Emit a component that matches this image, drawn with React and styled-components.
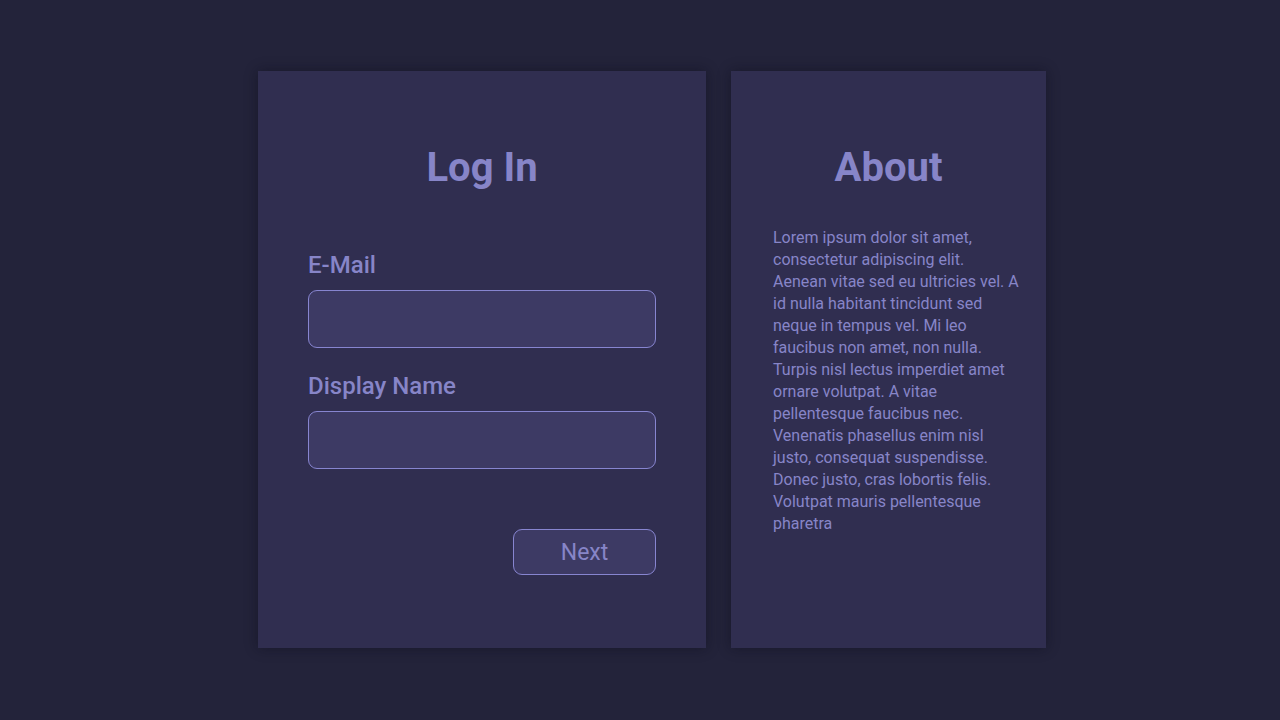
import React from "react";
import styled, { createGlobalStyle } from "styled-components";

const Global = createGlobalStyle`
  html, body { margin: 0; padding: 0; background: #23233a; }
  body { font-family: Roboto, "Noto Sans", sans-serif; }
  * { box-sizing: border-box; }
`;

const Page = styled.div`
  width: 1280px;
  height: 720px;
  background: #23233a;
  display: flex;
  align-items: flex-start;
  justify-content: center;
  padding: 71px 0 0 24px;
  gap: 25px;
`;

const Card = styled.section`
  width: ${(p) => p.$w}px;
  height: 577px;
  background: #302e50;
  box-shadow: 0 0 12px rgba(10, 10, 25, 0.45);
  display: flex;
  flex-direction: column;
  padding: 73px ${(p) => p.$pr}px 0 ${(p) => p.$pl}px;
`;

const Title = styled.h1`
  margin: 0 0 0 ${(p) => p.$shift || 0}px;
  font-size: 40px;
  line-height: 47px;
  font-weight: 700;
  color: #8785c8;
  text-align: center;
`;

const Form = styled.form`
  display: flex;
  flex-direction: column;
  margin-top: 60px;
`;

const Label = styled.label`
  font-size: 24px;
  line-height: 28px;
  font-weight: 500;
  color: #8785c8;
  margin-top: ${(p) => (p.$first ? 0 : 24)}px;
`;

const Input = styled.input`
  margin-top: 11px;
  height: 58px;
  width: 100%;
  background: #3d3a64;
  border: 1px solid #8785d0;
  border-radius: 9px;
  outline: none;
  color: #c8c6f0;
  font-family: inherit;
  font-size: 18px;
  padding: 0 14px;
`;

const Actions = styled.div`
  display: flex;
  justify-content: flex-end;
  margin-top: 60px;
`;

const Button = styled.button`
  width: 143px;
  height: 46px;
  background: #3d3a64;
  border: 1px solid #8785d0;
  border-radius: 9px;
  color: #8785c8;
  font-family: inherit;
  font-size: 23px;
  font-weight: 400;
  cursor: pointer;
`;

const Body = styled.p`
  margin: 36px 0 0;
  width: 246px;
  font-size: 16px;
  line-height: 22px;
  color: #8785c8;
`;

export default function App() {
  return (
    <>
      <Global />
      <Page>
        <Card $w={448} $pl={50} $pr={50}>
          <Title>Log In</Title>
          <Form onSubmit={(e) => e.preventDefault()}>
            <Label $first htmlFor="email">E-Mail</Label>
            <Input id="email" type="email" />
            <Label htmlFor="name">Display Name</Label>
            <Input id="name" type="text" />
            <Actions>
              <Button type="submit">Next</Button>
            </Actions>
          </Form>
        </Card>
        <Card $w={315} $pl={42} $pr={20}>
          <Title $shift={-22}>About</Title>
          <Body>
            Lorem ipsum dolor sit amet, consectetur adipiscing elit. Aenean
            vitae sed eu ultricies vel. A id nulla habitant tincidunt sed neque
            in tempus vel. Mi leo faucibus non amet, non nulla. Turpis nisl
            lectus imperdiet amet ornare volutpat. A vitae pellentesque faucibus
            nec. Venenatis phasellus enim nisl justo, consequat suspendisse.
            Donec justo, cras lobortis felis. Volutpat mauris pellentesque
            pharetra
          </Body>
        </Card>
      </Page>
    </>
  );
}
